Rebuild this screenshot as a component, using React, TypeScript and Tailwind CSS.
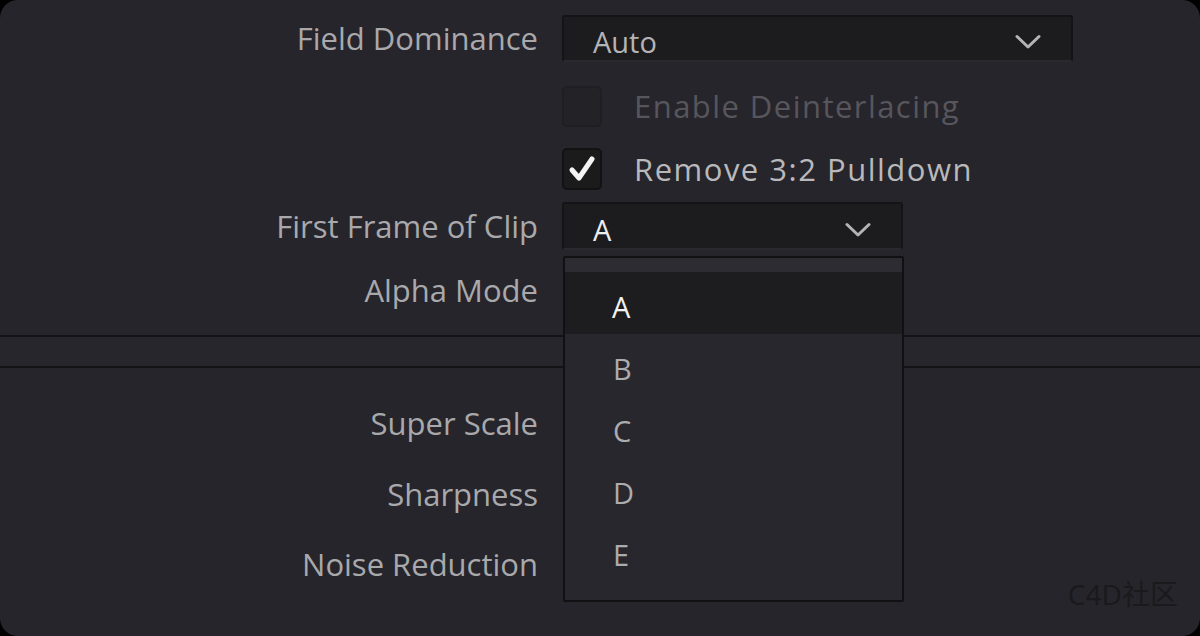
import React from "react";

const Chevron = ({ className }: { className?: string }) => (
  <svg viewBox="0 0 26 16" className={className} fill="none">
    <path d="M2 2.5 L13 13 L24 2.5" stroke="#b4b4b6" strokeWidth="3" strokeLinecap="round" strokeLinejoin="round" />
  </svg>
);

const Label = ({ children }: { children: React.ReactNode }) => (
  <div className="w-[538px] shrink-0 text-right text-[#a9a9ac] text-[31px] leading-none whitespace-nowrap">{children}</div>
);

export default function App() {
  return (
    <div className="w-[1200px] h-[636px] bg-black overflow-hidden" style={{ fontFamily: '"Open Sans", "Noto Sans", sans-serif' }}>
      <div className="relative w-full h-full bg-[#26252b] rounded-[18px] overflow-hidden flex flex-col">
        {/* Field Dominance */}
        <div className="flex items-center gap-[24px] mt-[15px] h-[47px]">
          <Label>Field Dominance</Label>
          <div className="w-[511px] h-[47px] bg-[#1c1c1e] border-2 border-[#141416] border-b-[#2a2a2e] rounded-[3px] flex items-center pl-[29px] pr-[30px] justify-between">
            <span className="text-[#b4b4b6] text-[29px] leading-none pt-[6px]">Auto</span>
            <Chevron className="w-[26px] h-[16px] mt-[6px]" />
          </div>
        </div>

        {/* Enable Deinterlacing */}
        <div className="flex items-center gap-[24px] mt-[24px] h-[41px]">
          <div className="w-[538px] shrink-0" />
          <div className="w-[40px] h-[41px] rounded-[5px] bg-[#232227] border-2 border-[#1f1e23]" />
          <span className="ml-[8px] text-[#57565c] text-[31px] leading-none tracking-[1.45px] whitespace-nowrap">Enable Deinterlacing</span>
        </div>

        {/* Remove 3:2 Pulldown */}
        <div className="flex items-center gap-[24px] mt-[21px] h-[42px]">
          <div className="w-[538px] shrink-0" />
          <div className="w-[40px] h-[42px] rounded-[5px] bg-[#1b1b1c] border-2 border-[#121213] flex items-center justify-center">
            <svg viewBox="0 0 30 30" className="w-[30px] h-[30px]" fill="none">
              <path d="M5 16 L12 24 L25 5" stroke="#f4f4f4" strokeWidth="5" strokeLinecap="round" strokeLinejoin="round" />
            </svg>
          </div>
          <span className="ml-[8px] text-[#b9b9bb] text-[31px] leading-none tracking-[1.5px] whitespace-nowrap">Remove 3:2 Pulldown</span>
        </div>

        {/* First Frame of Clip */}
        <div className="flex items-center gap-[24px] mt-[12px] h-[48px]">
          <Label>First Frame of Clip</Label>
          <div className="w-[341px] h-[48px] bg-[#1c1c1e] border-2 border-[#141416] border-b-[#2a2a2e] rounded-[3px] flex items-center pl-[29px] pr-[30px] justify-between">
            <span className="text-[#ededed] text-[29px] leading-none pt-[6px]">A</span>
            <Chevron className="w-[26px] h-[16px] mt-[8px]" />
          </div>
        </div>

        {/* Alpha Mode */}
        <div className="flex items-center gap-[24px] h-[80px]">
          <Label>Alpha Mode</Label>
        </div>

        {/* Divider band */}
        <div className="mt-[5px] h-[2px] bg-[#131315]" />
        <div className="h-[29px] bg-[#27262c]" />
        <div className="h-[2px] bg-[#131315]" />

        {/* Super Scale etc */}
        <div className="flex items-center h-[40px] mt-[35px]">
          <Label>Super Scale</Label>
        </div>
        <div className="flex items-center h-[40px] mt-[31px]">
          <Label>Sharpness</Label>
        </div>
        <div className="flex items-center h-[40px] mt-[30px]">
          <Label>Noise Reduction</Label>
        </div>

        {/* Popup menu */}
        <div className="absolute left-[563px] top-[256px] w-[341px] h-[346px] bg-[#28272d] border-2 border-[#111113] rounded-[2px] flex flex-col">
          <div className="h-[14px] bg-[#2d2c33]" />
          <div className="h-[62px] bg-[#1d1d1f] flex items-center pl-[47px] pt-[6px]">
            <span className="text-[#f2f2f2] text-[29px] leading-none">A</span>
          </div>
          {["B", "C", "D", "E"].map((l) => (
            <div key={l} className="h-[62px] flex items-center pl-[48px] pt-[6px]">
              <span className="text-[#acacae] text-[29px] leading-none">{l}</span>
            </div>
          ))}
        </div>

        {/* Watermark */}
        <div
          className="absolute right-[22px] top-[580px] text-[#1a1a1d] text-[28px] leading-none"
          style={{ fontFamily: '"Noto Sans", "Noto Sans CJK SC", sans-serif' }}
        >
          C4D社区
        </div>
      </div>
    </div>
  );
}
